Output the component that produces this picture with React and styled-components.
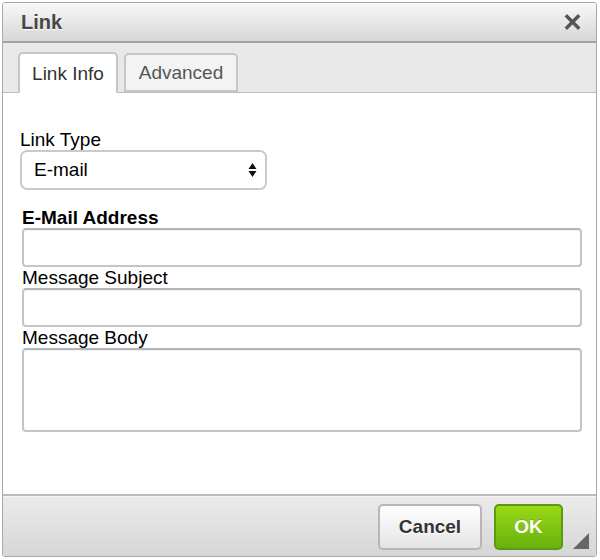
import styled, { createGlobalStyle } from 'styled-components';

const GlobalStyle = createGlobalStyle`
    body {
        margin: 0;
        background: #fff;
        font-family: "Liberation Sans", Arial, Helvetica, sans-serif;
    }
    * {
        box-sizing: border-box;
    }
`

const Dialog = styled.div`
    position: relative;
    display: flex;
    flex-direction: column;
    width: 595px;
    height: 555px;
    margin: 2px 0 0 2px;
    border: 1px solid #a8a8a8;
    border-radius: 3px;
    background: #fff;
    overflow: hidden;
`

const TitleBar = styled.div`
    display: flex;
    align-items: center;
    justify-content: space-between;
    height: 40px;
    padding: 0 14px 0 18px;
    background: linear-gradient(to bottom, #f8f8f8, #d6d7d6);
    border-bottom: 2px solid #a3a3a3;
`

const Title = styled.h1`
    margin: 0;
    font-size: 20px;
    font-weight: bold;
    color: #474747;
    text-shadow: 0 1px 0 #fff;
`

const CloseButton = styled.button`
    display: flex;
    align-items: center;
    justify-content: center;
    width: 20px;
    height: 20px;
    padding: 0;
    border: none;
    background: none;
    cursor: pointer;
`

const TabBar = styled.div`
    display: flex;
    align-items: flex-end;
    gap: 6px;
    height: 50px;
    padding-left: 15px;
    background: #e9e9e9;
    border-bottom: 1px solid #bcbcbc;
`

const Tab = styled.div`
    display: flex;
    align-items: center;
    justify-content: center;
    width: ${p => p.$width};
    height: ${p => (p.$active ? '41px' : '39px')};
    margin-bottom: ${p => (p.$active ? '-1px' : '0')};
    font-size: 19px;
    color: ${p => (p.$active ? '#333' : '#555')};
    background: ${p => (p.$active ? '#fff' : '#f3f3f3')};
    border: 2px solid #c6c6c6;
    border-bottom: ${p => (p.$active ? 'none' : '2px solid #c6c6c6')};
    border-radius: 5px 5px 0 0;
    cursor: pointer;
`

const Body = styled.div`
    flex: 1;
    display: flex;
    flex-direction: column;
    padding: 36px 13px 0 19px;
`

const Label = styled.label`
    display: block;
    flex: none;
    font-size: 19px;
    line-height: 21px;
    color: #000;
    font-weight: ${p => (p.$bold ? 'bold' : 'normal')};
    margin-left: ${p => (p.$outdent ? '-2px' : '0')};
`

const SelectBox = styled.div`
    display: flex;
    flex: none;
    align-items: center;
    justify-content: space-between;
    width: 247px;
    height: 40px;
    margin: 0 0 17px -2px;
    padding: 0 8px 0 12px;
    font-size: 19px;
    color: #000;
    background: #fff;
    border: 2px solid #c9cacc;
    border-radius: 7px;
`

const TextInput = styled.input`
    display: block;
    flex: none;
    width: 560px;
    height: 39px;
    margin: 0;
    padding: 0 8px;
    font-family: inherit;
    font-size: 17px;
    background: #fff;
    border: 2px solid #c4c5c8;
    border-top-color: #b3b4b7;
    border-radius: 4px;
    box-shadow: inset 0 1px 1px rgba(0, 0, 0, 0.06);
    outline: none;
`

const TextArea = styled.textarea`
    display: block;
    flex: none;
    width: 560px;
    height: 84px;
    margin: 0;
    padding: 6px 8px;
    font-family: inherit;
    font-size: 17px;
    border: 2px solid #c4c5c8;
    border-top-color: #b3b4b7;
    border-radius: 4px;
    box-shadow: inset 0 1px 1px rgba(0, 0, 0, 0.06);
    resize: none;
    outline: none;
`

const Footer = styled.div`
    position: relative;
    display: flex;
    align-items: center;
    justify-content: flex-end;
    gap: 12px;
    height: 62px;
    padding: 2px 33px 0 0;
    background: linear-gradient(to bottom, #ebebeb, #d5d6d5);
    border-top: 2px solid #bcbcbc;
    box-shadow: inset 0 1px 0 #f6f6f6;
`

const Button = styled.button`
    height: 46px;
    padding: 0;
    width: ${p => p.$width};
    font-family: inherit;
    font-size: 19px;
    font-weight: bold;
    border-radius: 5px;
    cursor: pointer;
    color: ${p => (p.$primary ? '#fff' : '#333')};
    background: ${p => (p.$primary
        ? 'linear-gradient(to bottom, #9ad818, #69b20c)'
        : 'linear-gradient(to bottom, #fff, #e4e4e4)')};
    border: 2px solid ${p => (p.$primary ? '#5c9b0f' : '#b6b6b6')};
    text-shadow: ${p => (p.$primary ? '0 -1px 0 rgba(0,0,0,0.15)' : '0 1px 0 #fff')};
`

const Grip = styled.div`
    position: absolute;
    right: 7px;
    bottom: 7px;
    width: 0;
    height: 0;
    border-style: solid;
    border-width: 0 0 16px 16px;
    border-color: transparent transparent #666 transparent;
`

function CloseIcon() {
    return (
        <svg width="17" height="16" viewBox="0 0 17 16">
            <path d="M3 2.5 L14 13.5 M14 2.5 L3 13.5" stroke="#555" strokeWidth="3.4" strokeLinecap="square" />
        </svg>
    );
}

function UpDown() {
    return (
        <svg width="9" height="16" viewBox="0 0 9 16">
            <path d="M4.5 1 L8.5 7 L0.5 7 Z M0.5 9 L8.5 9 L4.5 15 Z" fill="#111" />
        </svg>
    );
}

export default function App() {
    return (
        <>
        <GlobalStyle />
        <Dialog>
            <TitleBar>
                <Title>Link</Title>
                <CloseButton aria-label="Close"><CloseIcon /></CloseButton>
            </TitleBar>
            <TabBar>
                <Tab $active $width="100px">Link Info</Tab>
                <Tab $width="114px">Advanced</Tab>
            </TabBar>
            <Body>
                <Label $outdent>Link Type</Label>
                <SelectBox>
                    <span>E-mail</span>
                    <UpDown />
                </SelectBox>
                <Label $bold>E-Mail Address</Label>
                <TextInput type="text" />
                <Label>Message Subject</Label>
                <TextInput type="text" />
                <Label>Message Body</Label>
                <TextArea />
            </Body>
            <Footer>
                <Button $width="104px">Cancel</Button>
                <Button $primary $width="69px">OK</Button>
                <Grip />
            </Footer>
        </Dialog>
        </>
    )
}
